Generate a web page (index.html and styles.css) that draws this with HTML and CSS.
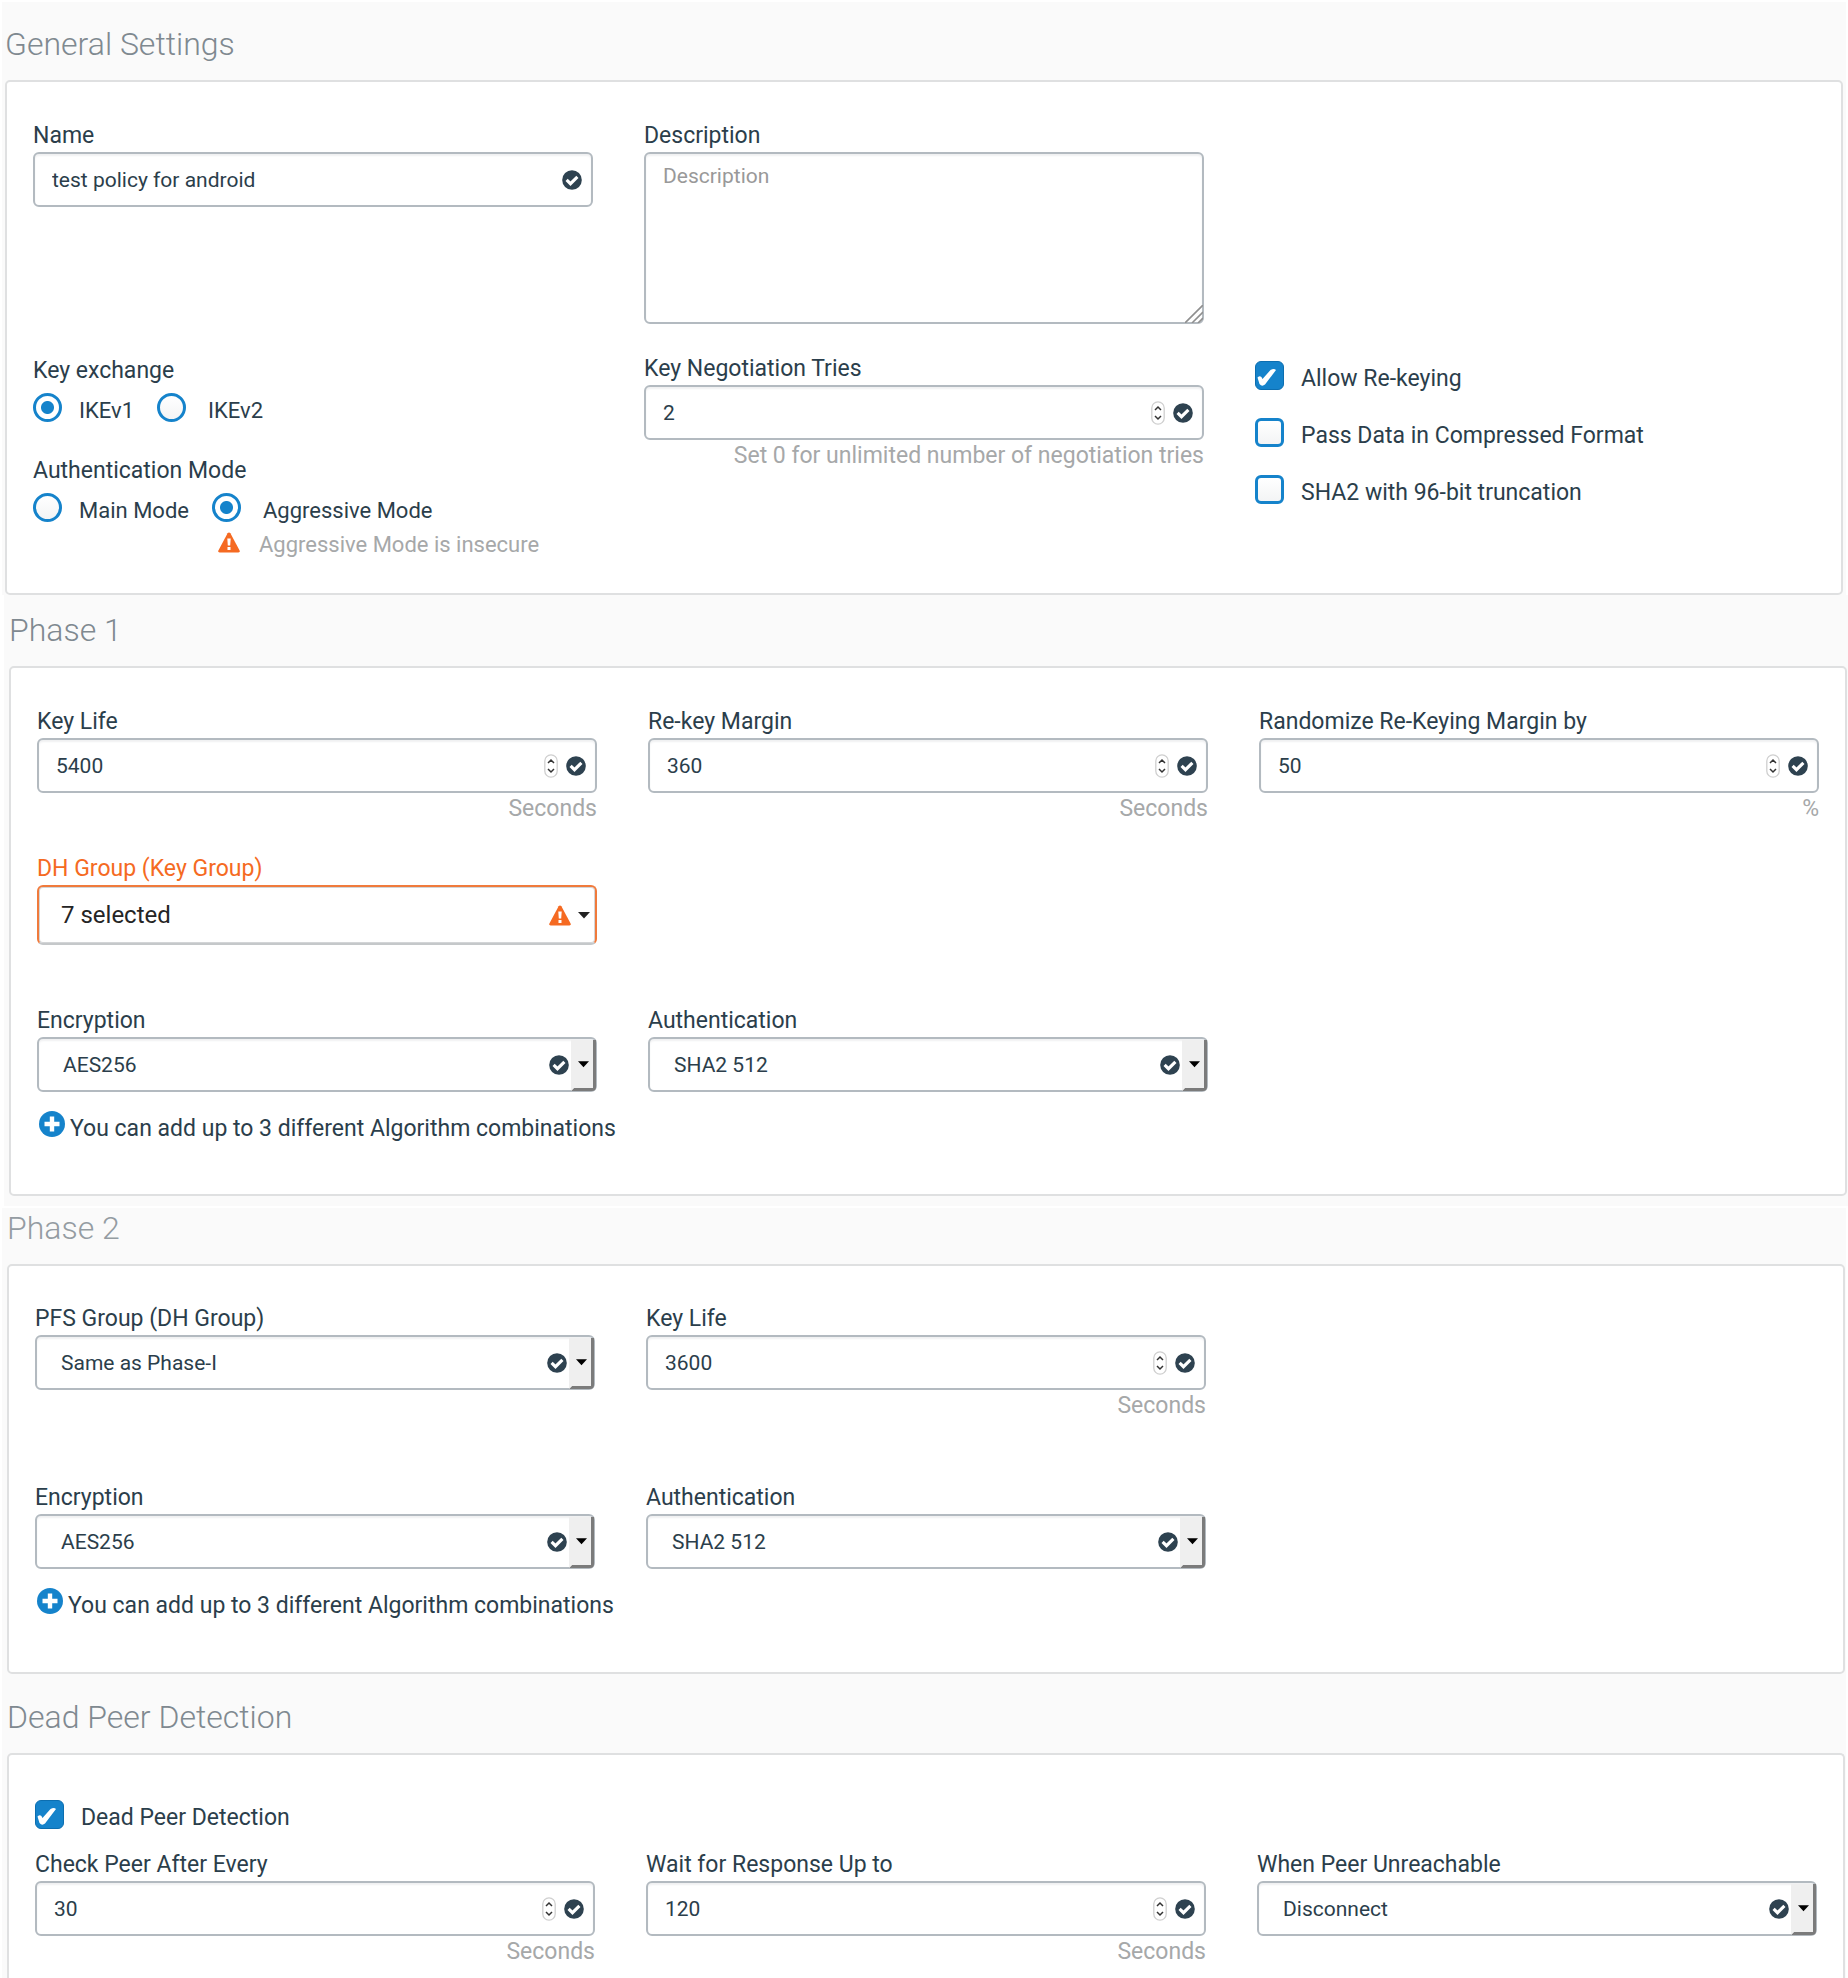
FILE: index.html
```html
<!DOCTYPE html>
<html lang="en">
<head>
<meta charset="utf-8">
<meta name="viewport" content="width=device-width, initial-scale=1">
<title>IPsec policy</title>
<link rel="stylesheet" href="styles.css">
</head>
<body>
<svg class="sprite" aria-hidden="true">
  <symbol id="i-check" viewBox="0 0 20 20"><circle cx="10" cy="10" r="9.8" fill="#2e4250"/><path d="M4.6 9.800l3.900 3.900 6.900-6.900" fill="none" stroke="#fff" stroke-width="3.100"/></symbol>
  <symbol id="i-warn" viewBox="0 0 22 21"><path d="M11 .4c.6 0 1 .3 1.400.9l9.200 17.200c.6 1.200 0 2-1.200 2H1.600c-1.200 0-1.800-.8-1.200-2L9.600 1.300C10 .7 10.400.4 11 .4z" fill="#f56a22"/><path d="M9.300 6.600h3.400l-.5 6.800H9.800zM9.500 15h3v2.900h-3z" fill="#fff"/></symbol>
  <symbol id="i-plus" viewBox="0 0 26 26"><circle cx="13" cy="13" r="13" fill="#1583cb"/><path d="M13 5.500v15M5.500 13h15" stroke="#fff" stroke-width="4.400"/></symbol>
  <symbol id="i-spin" viewBox="0 0 14 24"><rect x=".8" y=".8" width="12.400" height="22.400" rx="6.200" fill="#fff" stroke="#cfcfcf" stroke-width="1.300"/><path d="M4 9l3-3 3 3M4 15l3 3 3-3" fill="none" stroke="#333" stroke-width="1.500"/></symbol>
  <symbol id="i-caret" viewBox="0 0 12 7"><path d="M0 0h12L6 6.500z"/></symbol>
</svg>

<form class="page">
  <section class="section section-general">
    <h2 class="title">General Settings</h2>
    <div class="panel">
      <div class="grid">
        <div class="field">
          <label for="name">Name</label>
          <div class="control">
            <input class="box" id="name" type="text" value="test policy for android">
            <span class="marks"><svg class="ic-check"><use href="#i-check"/></svg></span>
          </div>
        </div>
        <div class="field">
          <label for="desc">Description</label>
          <div class="control">
            <textarea class="box area" id="desc" placeholder="Description"></textarea>
            <svg class="grip" viewBox="0 0 18 18"><path d="M0 18L18 0M7 18L18 7M13 18l5-5" stroke="#8f8f8f" stroke-width="1.600"/></svg>
          </div>
        </div>
      </div>
      <div class="grid">
        <div class="choices">
          <fieldset class="group">
            <legend>Key exchange</legend>
            <div class="radios">
              <label class="opt"><input type="radio" name="kx" checked><span>IKEv1</span></label>
              <label class="opt opt-wide"><input type="radio" name="kx"><span>IKEv2</span></label>
            </div>
          </fieldset>
          <fieldset class="group">
            <legend>Authentication Mode</legend>
            <div class="radios">
              <label class="opt"><input type="radio" name="mode"><span>Main Mode</span></label>
              <div class="stack">
                <label class="opt opt-wide"><input type="radio" name="mode" checked><span>Aggressive Mode</span></label>
                <p class="insecure"><svg class="ic-warn"><use href="#i-warn"/></svg>Aggressive Mode is insecure</p>
              </div>
            </div>
          </fieldset>
        </div>
        <div class="field">
          <label for="tries">Key Negotiation Tries</label>
          <div class="control">
            <input class="box" id="tries" type="number" value="2">
            <span class="marks"><svg class="ic-spin"><use href="#i-spin"/></svg><svg class="ic-check"><use href="#i-check"/></svg></span>
          </div>
          <p class="hint">Set 0 for unlimited number of negotiation tries</p>
        </div>
        <div class="checks">
          <label class="opt"><input type="checkbox" checked><span>Allow Re-keying</span></label>
          <label class="opt"><input type="checkbox"><span>Pass Data in Compressed Format</span></label>
          <label class="opt"><input type="checkbox"><span>SHA2 with 96-bit truncation</span></label>
        </div>
      </div>
    </div>
  </section>

  <section class="section section-phase1">
    <h2 class="title">Phase 1</h2>
    <div class="panel">
      <div class="grid">
        <div class="field">
          <label for="life1">Key Life</label>
          <div class="control">
            <input class="box" id="life1" type="number" value="5400">
            <span class="marks"><svg class="ic-spin"><use href="#i-spin"/></svg><svg class="ic-check"><use href="#i-check"/></svg></span>
          </div>
          <p class="hint">Seconds</p>
        </div>
        <div class="field">
          <label for="margin">Re-key Margin</label>
          <div class="control">
            <input class="box" id="margin" type="number" value="360">
            <span class="marks"><svg class="ic-spin"><use href="#i-spin"/></svg><svg class="ic-check"><use href="#i-check"/></svg></span>
          </div>
          <p class="hint">Seconds</p>
        </div>
        <div class="field">
          <label for="random">Randomize Re-Keying Margin by</label>
          <div class="control">
            <input class="box" id="random" type="number" value="50">
            <span class="marks"><svg class="ic-spin"><use href="#i-spin"/></svg><svg class="ic-check"><use href="#i-check"/></svg></span>
          </div>
          <p class="hint">%</p>
        </div>
      </div>
      <div class="grid">
        <div class="field field-warn">
          <label for="dh">DH Group (Key Group)</label>
          <button class="multi" id="dh" type="button">
            <span>7 selected</span>
            <svg class="ic-warn"><use href="#i-warn"/></svg>
            <svg class="ic-caret"><use href="#i-caret"/></svg>
          </button>
        </div>
      </div>
      <div class="grid">
        <div class="field">
          <label for="enc1">Encryption</label>
          <div class="control">
            <select class="box" id="enc1"><option>AES256</option></select>
            <span class="marks marks-select"><svg class="ic-check"><use href="#i-check"/></svg><span class="drop"><svg class="ic-arrow"><use href="#i-caret"/></svg></span></span>
          </div>
        </div>
        <div class="field">
          <label for="auth1">Authentication</label>
          <div class="control">
            <select class="box" id="auth1"><option>SHA2 512</option></select>
            <span class="marks marks-select"><svg class="ic-check"><use href="#i-check"/></svg><span class="drop"><svg class="ic-arrow"><use href="#i-caret"/></svg></span></span>
          </div>
        </div>
      </div>
      <div class="add">
        <button class="plus" type="button" aria-label="Add"><svg class="ic-plus"><use href="#i-plus"/></svg></button>
        <span>You can add up to 3 different Algorithm combinations</span>
      </div>
    </div>
  </section>

  <section class="section section-phase2">
    <h2 class="title">Phase 2</h2>
    <div class="panel">
      <div class="grid">
        <div class="field">
          <label for="pfs">PFS Group (DH Group)</label>
          <div class="control">
            <select class="box" id="pfs"><option>Same as Phase-I</option></select>
            <span class="marks marks-select"><svg class="ic-check"><use href="#i-check"/></svg><span class="drop"><svg class="ic-arrow"><use href="#i-caret"/></svg></span></span>
          </div>
        </div>
        <div class="field">
          <label for="life2">Key Life</label>
          <div class="control">
            <input class="box" id="life2" type="number" value="3600">
            <span class="marks"><svg class="ic-spin"><use href="#i-spin"/></svg><svg class="ic-check"><use href="#i-check"/></svg></span>
          </div>
          <p class="hint">Seconds</p>
        </div>
      </div>
      <div class="grid">
        <div class="field">
          <label for="enc2">Encryption</label>
          <div class="control">
            <select class="box" id="enc2"><option>AES256</option></select>
            <span class="marks marks-select"><svg class="ic-check"><use href="#i-check"/></svg><span class="drop"><svg class="ic-arrow"><use href="#i-caret"/></svg></span></span>
          </div>
        </div>
        <div class="field">
          <label for="auth2">Authentication</label>
          <div class="control">
            <select class="box" id="auth2"><option>SHA2 512</option></select>
            <span class="marks marks-select"><svg class="ic-check"><use href="#i-check"/></svg><span class="drop"><svg class="ic-arrow"><use href="#i-caret"/></svg></span></span>
          </div>
        </div>
      </div>
      <div class="add">
        <button class="plus" type="button" aria-label="Add"><svg class="ic-plus"><use href="#i-plus"/></svg></button>
        <span>You can add up to 3 different Algorithm combinations</span>
      </div>
    </div>
  </section>

  <section class="section section-dpd">
    <h2 class="title">Dead Peer Detection</h2>
    <div class="panel">
      <label class="opt"><input type="checkbox" checked><span>Dead Peer Detection</span></label>
      <div class="grid">
        <div class="field">
          <label for="every">Check Peer After Every</label>
          <div class="control">
            <input class="box" id="every" type="number" value="30">
            <span class="marks"><svg class="ic-spin"><use href="#i-spin"/></svg><svg class="ic-check"><use href="#i-check"/></svg></span>
          </div>
          <p class="hint">Seconds</p>
        </div>
        <div class="field">
          <label for="wait">Wait for Response Up to</label>
          <div class="control">
            <input class="box" id="wait" type="number" value="120">
            <span class="marks"><svg class="ic-spin"><use href="#i-spin"/></svg><svg class="ic-check"><use href="#i-check"/></svg></span>
          </div>
          <p class="hint">Seconds</p>
        </div>
        <div class="field">
          <label for="action">When Peer Unreachable</label>
          <div class="control">
            <select class="box" id="action"><option>Disconnect</option></select>
            <span class="marks marks-select"><svg class="ic-check"><use href="#i-check"/></svg><span class="drop"><svg class="ic-arrow"><use href="#i-caret"/></svg></span></span>
          </div>
        </div>
      </div>
    </div>
  </section>
</form>
</body>
</html>
```
FILE: styles.css
```css
* { box-sizing: border-box; }

body {
  margin: 0;
  background: #fff;
  color: #2b3e4b;
  font: 23px/26px Roboto, "Liberation Sans", sans-serif;
}

input, select, textarea, button { font-family: inherit; color: inherit; }
p { margin: 0; }
svg { display: block; flex: none; }
.sprite { position: absolute; width: 0; height: 0; }

.page { padding-top: 2px; }

/* Sections */
.section { background: #fafafa; }
.section-general { margin: 0 2px; padding: 22px 3px 0; }
.section-phase1 { margin-left: 4px; padding: 15px 1px 10px 5px; }
.section-phase2 { margin: 2px 2px 0; padding: 0 1px 0 5px; }
.section-dpd { margin: 0 2px; padding: 23px 1px 0 5px; }

.title {
  margin: 0 0 16px;
  color: #7f8990;
  font-size: 32px;
  font-weight: 300;
  line-height: 40px;
}
.section-phase2 .title { color: #949ca2; }

.panel {
  padding: 41px 26px 35px;
  border: 2px solid #dfe0e1;
  border-radius: 5px;
  background: #fff;
}
.section-phase1 .panel { padding-bottom: 52px; }
.section-phase2 .panel { padding: 40px 26px 53px; }
.section-dpd .panel { padding: 45px 26px 13px; border-bottom: 0; border-radius: 5px 5px 0 0; }

.grid {
  display: grid;
  grid-template-columns: repeat(3, minmax(0, 1fr));
  column-gap: 51px;
}
.section-general .grid + .grid { margin-top: 32px; }
.section-phase1 .grid:nth-child(2) { margin-top: 34px; }
.section-phase1 .grid:nth-child(3) { margin-top: 63px; }
.section-phase2 .grid + .grid { margin-top: 66px; }
.section-dpd .grid { margin-top: 21px; }

/* Fields */
.field { display: flex; flex-direction: column; gap: 3px; }
.control { position: relative; display: flex; }

.box {
  width: 100%;
  height: 55px;
  margin: 0;
  padding: 0 80px 0 17px;
  border: 2px solid #b3bac0;
  border-radius: 6px;
  background: #fff;
  box-shadow: inset 0 2px 2px #f0f1f2;
  font-size: 21px;
  line-height: 26px;
  appearance: none;
}
select.box { padding-left: 24px; }
input[type="number"] { appearance: textfield; }
.area { height: 172px; padding: 9px 17px; resize: none; }
.area::placeholder { color: #999; }
.grip { position: absolute; right: 1px; bottom: 1px; width: 18px; height: 18px; }

.marks {
  position: absolute;
  inset: 0 11px 0 auto;
  display: flex;
  align-items: center;
  gap: 8px;
  pointer-events: none;
}
.marks-select { right: 1px; gap: 2px; }
.drop {
  display: flex;
  align-items: center;
  justify-content: center;
  align-self: stretch;
  width: 25px;
  margin: 3px 0 1px;
  border: solid #7b7b7b;
  border-width: 0 3px 3px 0;
  border-left: 3px solid #efefef;
  border-bottom-right-radius: 4px;
  background: #efefef;
}

.hint { color: #a6a8a9; text-align: right; }

.field-warn label { color: #f56a22; }
.multi {
  display: flex;
  align-items: center;
  height: 60px;
  padding: 0 5px 0 22px;
  border: 2px solid #f07a3c;
  border-bottom-color: #c5c8ca;
  border-radius: 6px;
  background: #fff;
  box-shadow: inset 0 0 0 1px #d3d5d7;
  color: #252525;
  font-size: 24px;
  line-height: 28px;
  gap: 7px;
}
.multi span { flex: 1; text-align: left; }

.ic-check { width: 20px; height: 20px; }
.ic-spin { width: 14px; height: 24px; }
.ic-warn { width: 22px; height: 21px; }
.ic-caret { width: 12px; height: 7px; fill: #222; }
.ic-arrow { width: 11px; height: 7px; fill: #000; }
.ic-plus { width: 26px; height: 26px; }

/* Radios and tick boxes */
.choices { padding-top: 2px; }
.group { margin: 0; padding: 0; border: 0; }
.group + .group { margin-top: 34px; }
legend { padding: 0; }
.radios { display: flex; gap: 23px; padding-top: 9px; font-size: 22px; }

.opt { display: flex; gap: 17px; }
.opt span { padding-top: 5px; }
.opt-wide { gap: 22px; }
.opt input {
  flex: none;
  width: 29px;
  height: 29px;
  margin: 0;
  border: 3px solid #1583cb;
  background: linear-gradient(#fff, #f3f4f5);
  appearance: none;
}
.opt input[type="radio"] { border-radius: 50%; }
.opt input[type="radio"]:checked { background: radial-gradient(circle, #1583cb 6px, #fff 7px); }
.opt input[type="checkbox"] { position: relative; border-radius: 6px; }
.opt input[type="checkbox"]:checked { border: 1px solid #0c6eb0; background: #1583cb; }
.opt input[type="checkbox"]:checked::after {
  content: "";
  position: absolute;
  inset: 0;
  background: #fff;
  clip-path: path("M1.500 15.500Q5 12.500 6.500 17L14.500 8Q18 6 20 8L9 22.500Q6 25 3.500 22z");
}

.checks { display: flex; flex-direction: column; gap: 26px; padding-top: 5px; }

.insecure { display: flex; gap: 19px; padding: 8px 0 0 6px; color: #a6a8a9; }

.add { display: flex; gap: 5px; padding: 19px 0 0 2px; }
.add span { padding-top: 5px; }
.plus { height: 26px; padding: 0; border: 0; background: none; }
```
